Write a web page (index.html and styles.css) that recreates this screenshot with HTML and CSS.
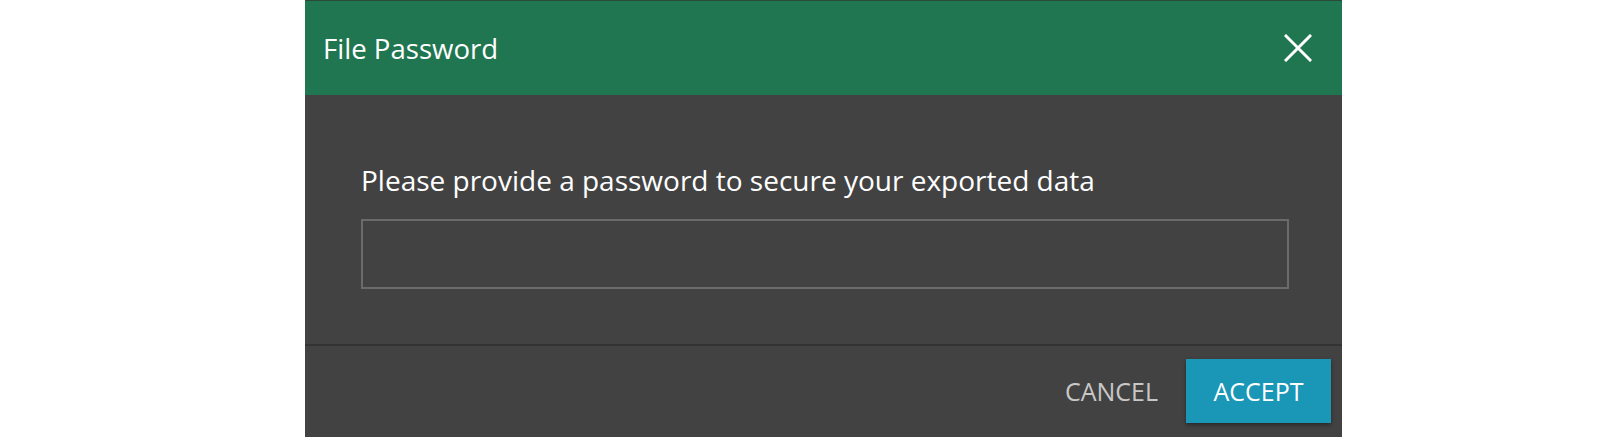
FILE: index.html
```html
<!doctype html>
<html>
  <head>
    <meta charset="utf-8">
    <title>File Password</title>
    <link rel="stylesheet" href="styles.css">
  </head>
  <body>
    <div class="dialog">
      <div class="dialog-header">
        <h1>File Password</h1>
        <button class="close" aria-label="Close">
          <svg width="28" height="28" viewBox="0 0 28 28">
            <path d="M2 2L26 26M26 2L2 26" stroke="#fff" stroke-width="3" stroke-linecap="square"/>
          </svg>
        </button>
      </div>
      <div class="dialog-body">
        <p>Please provide a password to secure your exported data</p>
        <input type="password" class="password">
      </div>
      <div class="dialog-footer">
        <button class="btn btn-flat">CANCEL</button>
        <button class="btn btn-primary">ACCEPT</button>
      </div>
    </div>
  </body>
</html>
```

FILE: styles.css
```css
body {
  margin: 0;
  background: white;
  font-family: "Open Sans", sans-serif;
}

.dialog {
  margin-left: 305px;
  width: 1037px;
  height: 437px;
  background: #424242;
  overflow: hidden;
}

.dialog-header {
  display: flex;
  align-items: center;
  justify-content: space-between;
  height: 95px;
  padding: 0 30px 1px 18px;
  box-sizing: border-box;
  background: #1f7650;
  border-top: 1px solid #2b4a3b;
}

.dialog-header h1 {
  margin: 0;
  font-size: 27.6px;
  font-weight: normal;
  color: white;
}

.close {
  display: flex;
  padding: 0;
  margin-top: 1px;
  border: 0;
  background: none;
}

.dialog-body {
  height: 251px;
  padding: 67px 53px 0 56px;
  box-sizing: border-box;
  border-bottom: 2px solid #333;
}

.dialog-body p {
  margin: 0 0 21px;
  font-size: 28px;
  line-height: 36px;
  color: white;
}

.password {
  display: block;
  width: 100%;
  height: 70px;
  box-sizing: border-box;
  background: transparent;
  border: 2px solid #6b6b6b;
}

.dialog-footer {
  display: flex;
  justify-content: flex-end;
  align-items: center;
  gap: 28px;
  padding: 13px 11px 0 0;
}

.btn {
  font-family: "Open Sans", sans-serif;
  font-size: 25px;
  border: 0;
  background: none;
  color: #c8c8c8;
}

.btn-flat {
  padding: 0;
}

.btn-primary {
  width: 145px;
  height: 64px;
  padding: 0;
  background: #1a96b7;
  color: white;
  box-shadow: 0 2px 4px rgba(0, 0, 0, 0.4);
}
```
